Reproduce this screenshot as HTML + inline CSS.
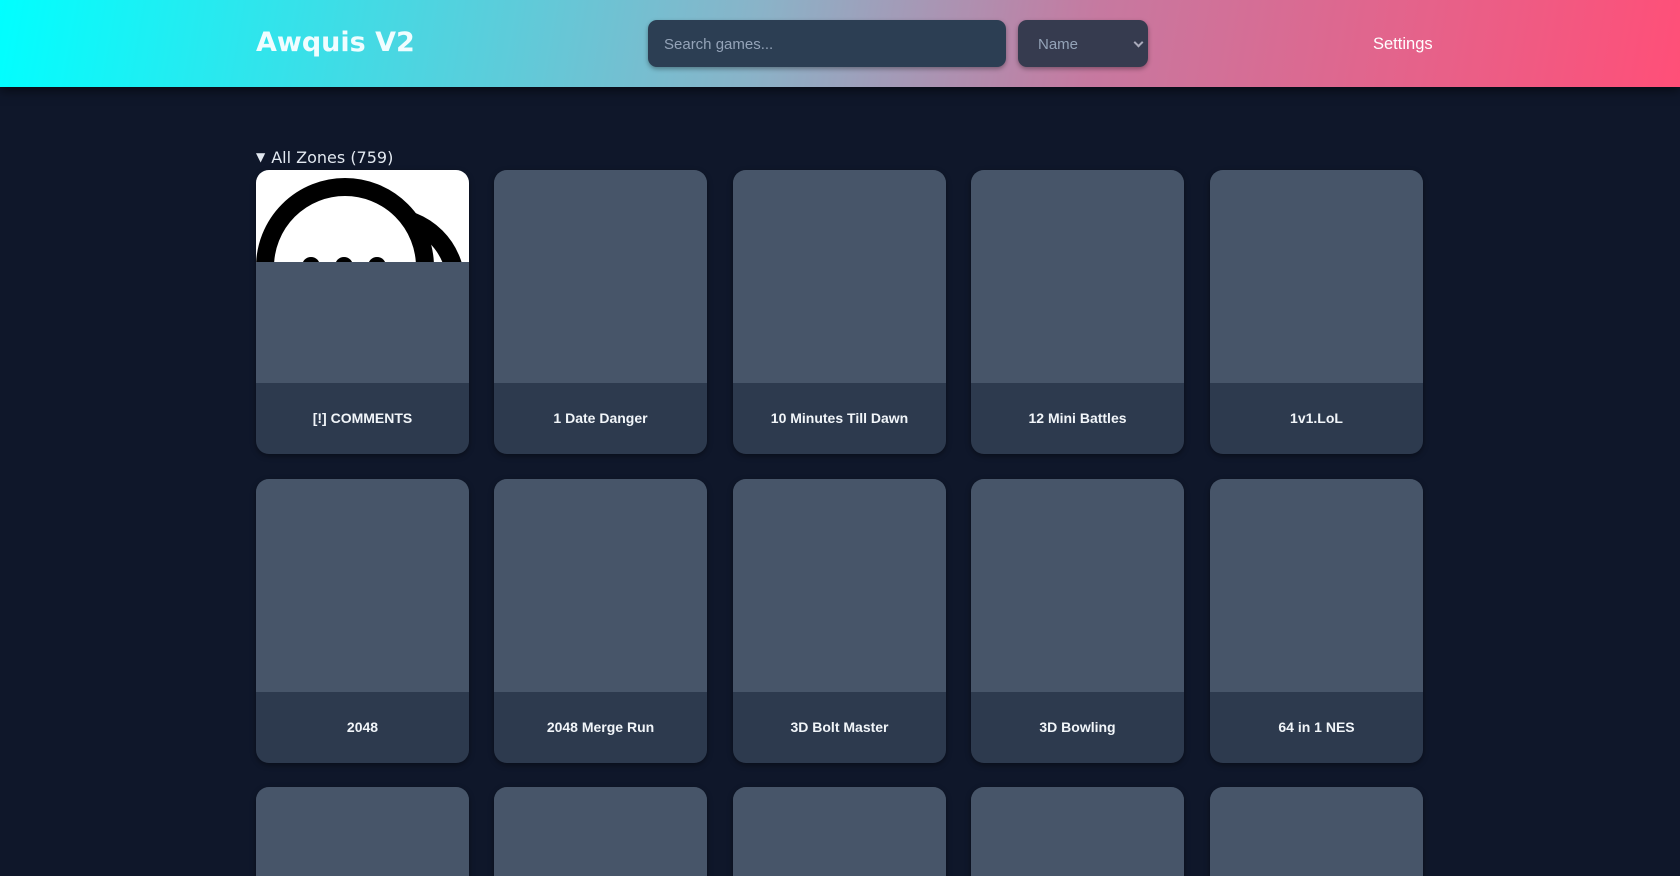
<!DOCTYPE html>
<html><head><meta charset="utf-8"><style>
*{box-sizing:border-box;margin:0;padding:0}
html{width:1680px;height:876px;overflow:hidden}
body{width:1680px;height:876px;overflow:hidden;background:#0f172a;font-family:"Liberation Sans",sans-serif;position:relative}
.hdr{position:absolute;left:0;top:0;width:1680px;height:87px;background:linear-gradient(100deg,#00ffff 0%,#8ab3c8 45%,#c679a0 65%,#ff4f78 100%);box-shadow:0 4px 10px rgba(0,0,0,.5)}
.title{position:absolute;left:256px;top:27px;font-family:"DejaVu Sans",sans-serif;font-weight:bold;font-size:27px;color:#f0fdff}
.search{position:absolute;left:648px;top:20px;width:358px;height:47px;border-radius:9px;background:#2c3e53;box-shadow:0 2px 5px rgba(0,0,0,.35);color:#94a3b8;font-size:15px;padding:16px 16px}
.sel{position:absolute;left:1018px;top:20px;width:130px;height:47px;border-radius:9px;background:#363b4f;box-shadow:0 2px 5px rgba(0,0,0,.35);color:#94a3b8;font-size:15px;padding:16px 20px}
.sel:after{content:"";position:absolute;right:6px;top:19px;width:5px;height:5px;border-right:2px solid #aab;border-bottom:2px solid #aab;transform:rotate(45deg)}
.set{position:absolute;left:1373px;top:35px;color:#fff;font-size:16.5px}
.zones{position:absolute;left:256px;top:148px;color:#e2e8f0;font-family:"DejaVu Sans",sans-serif;font-size:16px}
.zones span{font-size:12px;margin-right:6px;position:relative;top:-2px}
.card{position:absolute;width:213px;height:284px;border-radius:13px;background:#2d3a4e;overflow:hidden;box-shadow:0 2px 6px rgba(0,0,0,.4)}
.card .img{height:213px;background:#475569;position:relative}
.card .lb{height:71px;line-height:71px;text-align:center;color:#f1f5f9;font-weight:bold;font-size:14px}
</style></head><body>
<div class="hdr"><div class="title">Awquis V2</div><div class="search">Search games...</div><div class="sel">Name</div><div class="set">Settings</div></div>
<div class="zones"><span>▼</span>All Zones (759)</div>
<div class="card" style="left:256px;top:170px"><div class="img"><svg width="213" height="92" style="position:absolute;left:0;top:0;background:#fff"><circle cx="132" cy="115" r="68" fill="none" stroke="#000" stroke-width="18"/><circle cx="89" cy="97" r="80" fill="#fff" stroke="#000" stroke-width="18"/><circle cx="55" cy="96" r="9"/><circle cx="88" cy="96" r="9"/><circle cx="121" cy="96" r="9"/></svg></div><div class="lb">[!] COMMENTS</div></div>
<div class="card" style="left:494px;top:170px"><div class="img"></div><div class="lb">1 Date Danger</div></div>
<div class="card" style="left:733px;top:170px"><div class="img"></div><div class="lb">10 Minutes Till Dawn</div></div>
<div class="card" style="left:971px;top:170px"><div class="img"></div><div class="lb">12 Mini Battles</div></div>
<div class="card" style="left:1210px;top:170px"><div class="img"></div><div class="lb">1v1.LoL</div></div>
<div class="card" style="left:256px;top:479px"><div class="img"></div><div class="lb">2048</div></div>
<div class="card" style="left:494px;top:479px"><div class="img"></div><div class="lb">2048 Merge Run</div></div>
<div class="card" style="left:733px;top:479px"><div class="img"></div><div class="lb">3D Bolt Master</div></div>
<div class="card" style="left:971px;top:479px"><div class="img"></div><div class="lb">3D Bowling</div></div>
<div class="card" style="left:1210px;top:479px"><div class="img"></div><div class="lb">64 in 1 NES</div></div>
<div class="card" style="left:256px;top:787px"><div class="img"></div></div>
<div class="card" style="left:494px;top:787px"><div class="img"></div></div>
<div class="card" style="left:733px;top:787px"><div class="img"></div></div>
<div class="card" style="left:971px;top:787px"><div class="img"></div></div>
<div class="card" style="left:1210px;top:787px"><div class="img"></div></div>
</body></html>
